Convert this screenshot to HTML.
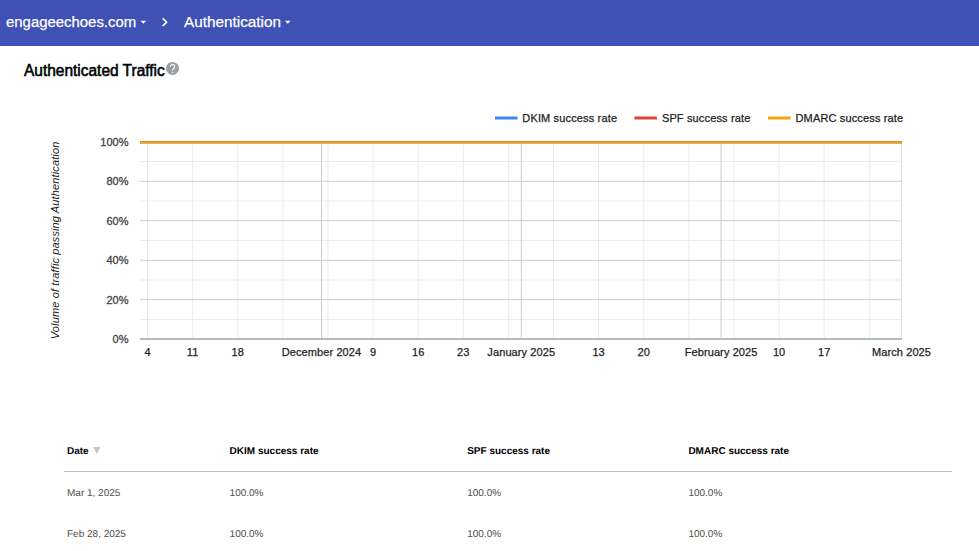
<!DOCTYPE html>
<html><head><meta charset="utf-8">
<style>
html,body{margin:0;padding:0;background:#fff;}
body{width:979px;height:551px;overflow:hidden;position:relative;font-family:"Liberation Sans",sans-serif;}
.hdr{position:absolute;left:0;top:0;width:979px;height:46px;background:#3f51b5;}
.hdr span{position:absolute;color:#fff;-webkit-text-stroke:0.25px #fff;font-size:15.5px;line-height:20px;white-space:nowrap;}
.t{position:absolute;white-space:nowrap;}
.title{transform-origin:0 0;transform:scaleX(0.992);left:24.3px;top:60.7px;font-size:15.6px;font-weight:normal;-webkit-text-stroke:0.55px #000;color:#000;line-height:20px;}
svg{position:absolute;left:0;top:0;}
.th{position:absolute;text-rendering:geometricPrecision;font-size:10px;font-weight:bold;color:#000;line-height:14px;white-space:nowrap;}
.td{position:absolute;text-rendering:geometricPrecision;font-size:10px;color:#4d4d4d;line-height:14px;white-space:nowrap;}
</style></head><body>
<div class="hdr">
<span id="h1" style="left:6px;top:11.6px;transform-origin:0 0;transform:scaleX(0.962);">engageechoes.com</span>
<span id="h2" style="left:184px;top:11.6px;transform-origin:0 0;transform:scaleX(0.988);">Authentication</span>
</div>
<div class="t title" id="title">Authenticated Traffic</div>

<div class="th" style="left:67px;top:444.5px;">Date</div>
<div class="th" style="left:229.6px;top:444.5px;">DKIM success rate</div>
<div class="th" style="left:467.2px;top:444.5px;">SPF success rate</div>
<div class="th" style="left:688.4px;top:444.5px;">DMARC success rate</div>
<div style="position:absolute;left:64px;top:471px;width:888px;height:1px;background:#bbb;"></div>
<div class="td" style="left:67px;top:487px;">Mar 1, 2025</div>
<div class="td" style="left:229.6px;top:487px;">100.0%</div>
<div class="td" style="left:467.2px;top:487px;">100.0%</div>
<div class="td" style="left:688.4px;top:487px;">100.0%</div>
<div class="td" style="left:67px;top:528px;">Feb 28, 2025</div>
<div class="td" style="left:229.6px;top:528px;">100.0%</div>
<div class="td" style="left:467.2px;top:528px;">100.0%</div>
<div class="td" style="left:688.4px;top:528px;">100.0%</div>
<svg width="979" height="551" viewBox="0 0 979 551" font-family="Liberation Sans, sans-serif">
<!-- header arrows -->
<path d="M140.6 20.8h5.6l-2.8 2.9z" fill="#fff"/>
<path d="M285 20.8h5.6l-2.8 2.9z" fill="#fff"/>
<path d="M162.7 18.4l3.9 3.8-3.9 3.8" fill="none" stroke="#fff" stroke-width="1.7"/>
<!-- help icon -->
<circle cx="172.5" cy="68.4" r="6.5" fill="#9e9e9e"/>
<path d="M170.5 66.7A2.1 2.1 0 1 1 174.2 67.9C173.3 68.6 172.6 69.1 172.6 70.6" fill="none" stroke="#fff" stroke-width="1.1"/>
<circle cx="172.6" cy="72.5" r="0.7" fill="#fff"/>
<path d="M93.1 447h7.4l-3.7 7z" fill="#c6c6c6"/>
<g id="grid">
<rect x="147.00" y="141.8" width="1" height="197.4" fill="#ebebeb"/>
<rect x="192.11" y="141.8" width="1" height="197.4" fill="#ebebeb"/>
<rect x="237.22" y="141.8" width="1" height="197.4" fill="#ebebeb"/>
<rect x="282.33" y="141.8" width="1" height="197.4" fill="#ebebeb"/>
<rect x="327.44" y="141.8" width="1" height="197.4" fill="#ebebeb"/>
<rect x="372.56" y="141.8" width="1" height="197.4" fill="#ebebeb"/>
<rect x="417.67" y="141.8" width="1" height="197.4" fill="#ebebeb"/>
<rect x="462.78" y="141.8" width="1" height="197.4" fill="#ebebeb"/>
<rect x="507.89" y="141.8" width="1" height="197.4" fill="#ebebeb"/>
<rect x="553.00" y="141.8" width="1" height="197.4" fill="#ebebeb"/>
<rect x="598.11" y="141.8" width="1" height="197.4" fill="#ebebeb"/>
<rect x="643.22" y="141.8" width="1" height="197.4" fill="#ebebeb"/>
<rect x="688.33" y="141.8" width="1" height="197.4" fill="#ebebeb"/>
<rect x="733.44" y="141.8" width="1" height="197.4" fill="#ebebeb"/>
<rect x="778.56" y="141.8" width="1" height="197.4" fill="#ebebeb"/>
<rect x="823.67" y="141.8" width="1" height="197.4" fill="#ebebeb"/>
<rect x="868.78" y="141.8" width="1" height="197.4" fill="#ebebeb"/>
<rect x="140" y="161.04" width="762" height="1" fill="#ebebeb"/>
<rect x="140" y="200.52" width="762" height="1" fill="#ebebeb"/>
<rect x="140" y="240.00" width="762" height="1" fill="#ebebeb"/>
<rect x="140" y="279.48" width="762" height="1" fill="#ebebeb"/>
<rect x="140" y="318.96" width="762" height="1" fill="#ebebeb"/>
<rect x="140" y="180.78" width="762" height="1" fill="#ccc"/>
<rect x="140" y="220.26" width="762" height="1" fill="#ccc"/>
<rect x="140" y="259.74" width="762" height="1" fill="#ccc"/>
<rect x="140" y="299.22" width="762" height="1" fill="#ccc"/>
<rect x="901.1" y="141.8" width="0.9" height="197.4" fill="#d9d9d9"/>
<rect x="321.00" y="141.8" width="1" height="197.4" fill="#ccc"/>
<rect x="520.78" y="141.8" width="1" height="197.4" fill="#ccc"/>
<rect x="720.56" y="141.8" width="1" height="197.4" fill="#ccc"/>
<rect x="140" y="338" width="762" height="2" fill="#b9b9b9"/>
<path d="M140 142.3H902" stroke="#4285f4" stroke-width="2" fill="none"/>
<path d="M140 142.3H902" stroke="#db4437" stroke-width="2" fill="none"/>
<path d="M140 142.35H902" stroke="#f1a111" stroke-width="2.1" fill="none"/>
<text x="128.5" y="145.6" text-anchor="end" font-size="11" fill="#444" stroke="#444" stroke-width="0.3">100%</text>
<text x="128.5" y="185.1" text-anchor="end" font-size="11" fill="#444" stroke="#444" stroke-width="0.3">80%</text>
<text x="128.5" y="224.6" text-anchor="end" font-size="11" fill="#444" stroke="#444" stroke-width="0.3">60%</text>
<text x="128.5" y="264.0" text-anchor="end" font-size="11" fill="#444" stroke="#444" stroke-width="0.3">40%</text>
<text x="128.5" y="303.5" text-anchor="end" font-size="11" fill="#444" stroke="#444" stroke-width="0.3">20%</text>
<text x="128.5" y="343.0" text-anchor="end" font-size="11" fill="#444" stroke="#444" stroke-width="0.3">0%</text>
<text x="147.5" y="355.8" text-anchor="middle" font-size="11" letter-spacing="0.1" fill="#222" stroke="#222" stroke-width="0.25">4</text>
<text x="192.6" y="355.8" text-anchor="middle" font-size="11" letter-spacing="0.1" fill="#222" stroke="#222" stroke-width="0.25">11</text>
<text x="237.7" y="355.8" text-anchor="middle" font-size="11" letter-spacing="0.1" fill="#222" stroke="#222" stroke-width="0.25">18</text>
<text x="321.5" y="355.8" text-anchor="middle" font-size="11" letter-spacing="0.1" fill="#222" stroke="#222" stroke-width="0.25">December 2024</text>
<text x="373.1" y="355.8" text-anchor="middle" font-size="11" letter-spacing="0.1" fill="#222" stroke="#222" stroke-width="0.25">9</text>
<text x="418.2" y="355.8" text-anchor="middle" font-size="11" letter-spacing="0.1" fill="#222" stroke="#222" stroke-width="0.25">16</text>
<text x="463.3" y="355.8" text-anchor="middle" font-size="11" letter-spacing="0.1" fill="#222" stroke="#222" stroke-width="0.25">23</text>
<text x="521.3" y="355.8" text-anchor="middle" font-size="11" letter-spacing="0.1" fill="#222" stroke="#222" stroke-width="0.25">January 2025</text>
<text x="598.6" y="355.8" text-anchor="middle" font-size="11" letter-spacing="0.1" fill="#222" stroke="#222" stroke-width="0.25">13</text>
<text x="643.7" y="355.8" text-anchor="middle" font-size="11" letter-spacing="0.1" fill="#222" stroke="#222" stroke-width="0.25">20</text>
<text x="721.1" y="355.8" text-anchor="middle" font-size="11" letter-spacing="0.1" fill="#222" stroke="#222" stroke-width="0.25">February 2025</text>
<text x="779.1" y="355.8" text-anchor="middle" font-size="11" letter-spacing="0.1" fill="#222" stroke="#222" stroke-width="0.25">10</text>
<text x="824.2" y="355.8" text-anchor="middle" font-size="11" letter-spacing="0.1" fill="#222" stroke="#222" stroke-width="0.25">17</text>
<text x="901.5" y="355.8" text-anchor="middle" font-size="11" letter-spacing="0.1" fill="#222" stroke="#222" stroke-width="0.25">March 2025</text>
<text transform="translate(58.8 240.4) rotate(-90)" text-anchor="middle" font-size="11" font-style="italic" letter-spacing="0.13" fill="#222">Volume of traffic passing Authentication</text>
<rect x="495" y="116.5" width="22.5" height="3" fill="#4285f4"/>
<text x="522.3" y="122" font-size="11" letter-spacing="0.15" fill="#222" stroke="#222" stroke-width="0.25">DKIM success rate</text>
<rect x="634.4" y="116.5" width="22.5" height="3" fill="#db4437"/>
<text x="661.9" y="122" font-size="11" letter-spacing="0.15" fill="#222" stroke="#222" stroke-width="0.25">SPF success rate</text>
<rect x="768" y="116.5" width="22.5" height="3" fill="#f4a40f"/>
<text x="795.5" y="122" font-size="11" letter-spacing="0.15" fill="#222" stroke="#222" stroke-width="0.25">DMARC success rate</text>
</g>
</svg>
</body></html>
